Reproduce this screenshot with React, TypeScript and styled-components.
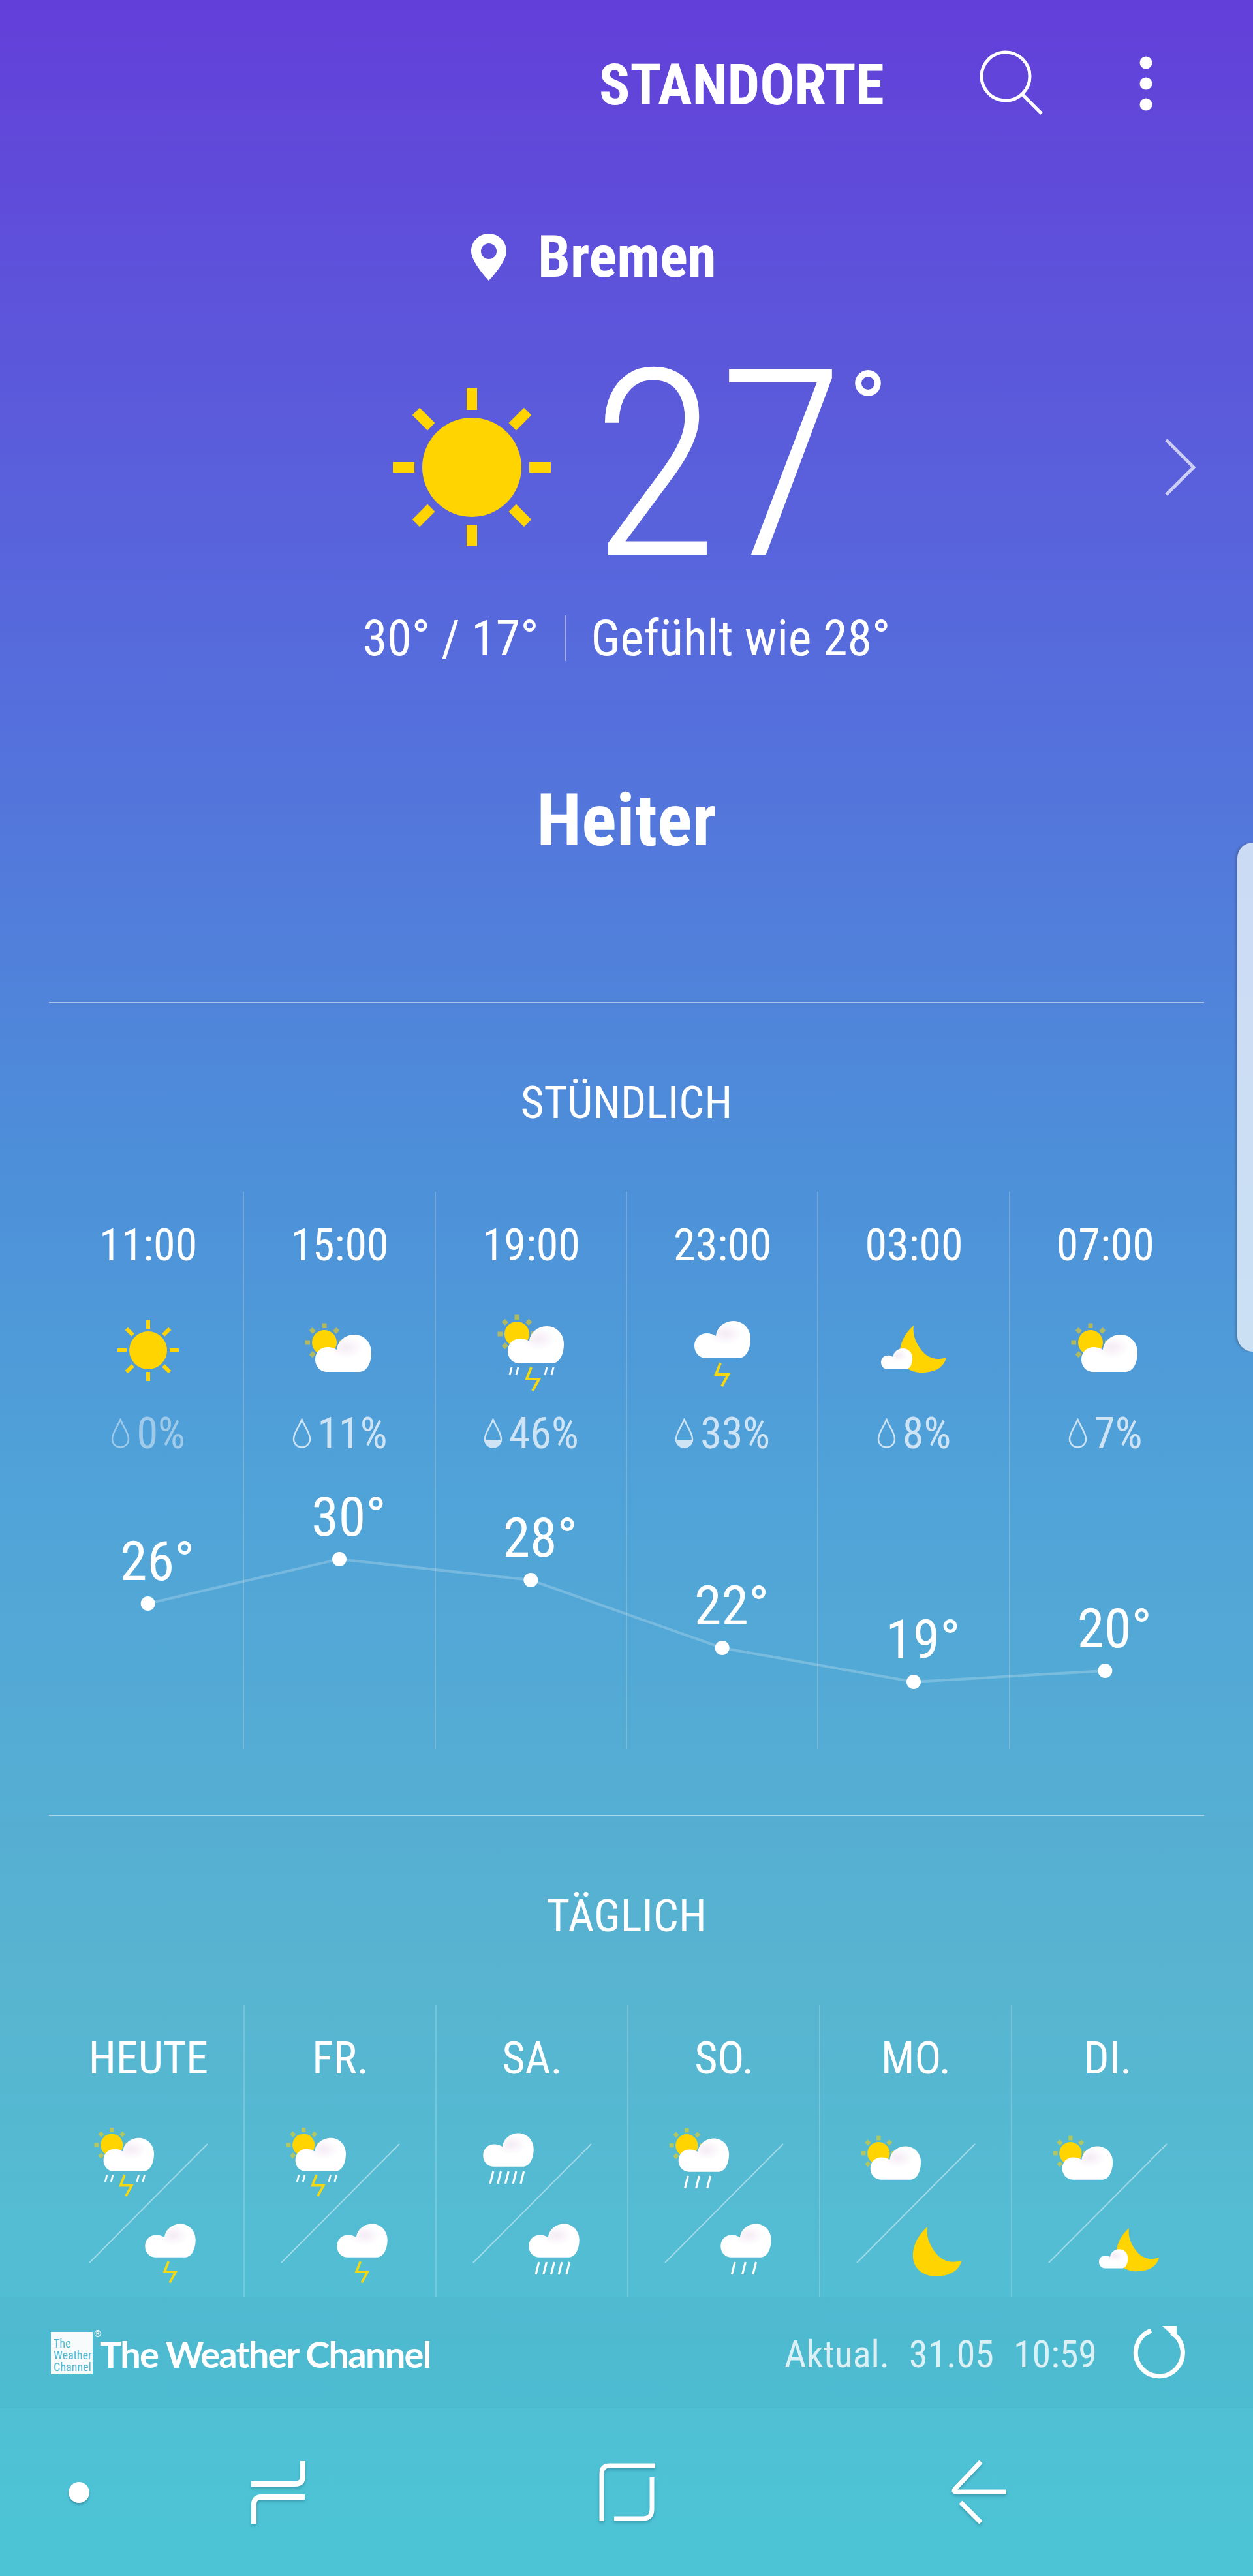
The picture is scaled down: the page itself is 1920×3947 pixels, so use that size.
import React from 'react';
import styled, { createGlobalStyle } from 'styled-components';

const CONDENSED = '"Roboto Condensed", Roboto, "Liberation Sans", sans-serif';
const YELLOW = '#ffd400';

const GlobalStyle = createGlobalStyle`
    html, body {
        margin: 0;
        padding: 0;
        background: #4cc4d6;
    }
    * {
        box-sizing: border-box;
    }
`;

const Page = styled.div`
    position: relative;
    width: 1920px;
    height: 3947px;
    overflow: hidden;
    display: flex;
    flex-direction: column;
    color: #fff;
    font-family: ${CONDENSED};
    font-stretch: 75%;
    background: linear-gradient(180deg,
        rgb(99, 63, 217) 0%,
        rgb(85, 110, 220) 27%,
        rgb(77, 143, 217) 45%,
        rgb(80, 163, 216) 58%,
        rgb(88, 180, 208) 77%,
        rgb(82, 190, 212) 89%,
        rgb(76, 196, 214) 100%);
`;

const TopBar = styled.div`
    height: 260px;
    display: flex;
    align-items: center;
    padding-left: 918px;
`;

const LocationsLink = styled.div`
    font-size: 88px;
    font-weight: 700;
    line-height: 100px;
    width: 583px;
`;

const SearchIcon = styled.svg`
    width: 100px;
    height: 100px;
    margin-right: 143px;
    margin-top: -6px;
`;

const MoreIcon = styled.svg`
    width: 24px;
    height: 90px;
    margin-top: -4px;
`;

const LocationRow = styled.div`
    height: 268px;
    display: flex;
    align-items: center;
    padding-left: 722px;
    gap: 48px;
`;

const CityName = styled.div`
    font-size: 89px;
    font-weight: 700;
    line-height: 100px;
`;

const CurrentRow = styled.div`
    height: 376px;
    display: flex;
    align-items: center;
    padding-left: 598px;
`;

const BigSun = styled.svg`
    width: 250px;
    height: 250px;
    flex: none;
`;

const BigTemp = styled.div`
    font-size: 400px;
    font-weight: 300;
    line-height: 300px;
    margin-left: 58px;
    margin-bottom: 4px;
    width: 394px;
`;

const BigDegree = styled.div`
    align-self: flex-start;
    font-size: 160px;
    font-weight: 400;
    line-height: 160px;
    margin-top: 20px;
`;

const Chevron = styled.svg`
    width: 48px;
    height: 88px;
    margin-left: auto;
    margin-right: 88px;
`;

const MetaRow = styled.div`
    height: 148px;
    display: flex;
    align-items: center;
    justify-content: center;
    gap: 39px;
    font-size: 76px;
    line-height: 90px;
`;

const MetaSep = styled.div`
    width: 2px;
    height: 70px;
    background: rgba(255, 255, 255, 0.45);
`;

const Condition = styled.div`
    height: 483px;
    padding-bottom: 75px;
    display: flex;
    align-items: center;
    justify-content: center;
    font-size: 112px;
    font-weight: 700;
`;

const Rule = styled.div<{ $gap?: number }>`
    height: 2px;
    margin: ${(p) => p.$gap ?? 0}px 75px 0;
    background: rgba(255, 255, 255, 0.5);
`;

const SectionTitle = styled.div`
    height: 100px;
    margin: 102px 0 87px;
    display: flex;
    align-items: center;
    justify-content: center;
    font-size: 69px;
`;

const HourGrid = styled.div`
    position: relative;
    height: 854px;
    margin: 0 80px;
    display: grid;
    grid-template-columns: repeat(6, 1fr);
`;

const Column = styled.div<{ $first?: boolean }>`
    display: flex;
    flex-direction: column;
    align-items: center;
    border-left: 2px solid ${(p) => (p.$first ? 'transparent' : 'rgba(255, 255, 255, 0.2)')};
    margin-left: -1px;
`;

const HeadCell = styled.div`
    height: 164px;
    display: flex;
    align-items: center;
    font-size: 68px;
`;

const HourIconCell = styled.div`
    height: 158px;
    display: flex;
    align-items: center;
`;

const HourIcon = styled.svg`
    width: 130px;
    height: 130px;
    overflow: visible;
`;

const PopCell = styled.div<{ $dim?: boolean }>`
    height: 96px;
    display: flex;
    align-items: center;
    gap: 10px;
    font-size: 66px;
    opacity: ${(p) => (p.$dim ? 0.45 : 0.72)};
`;

const DropIcon = styled.svg`
    width: 29px;
    height: 46px;
`;

const ChartCell = styled.div`
    position: relative;
    flex: 1;
    width: 100%;
`;

const TempLabel = styled.div`
    position: absolute;
    left: 0;
    right: 0;
    padding-left: 28px;
    text-align: center;
    font-size: 84px;
    line-height: 90px;
`;

const ChartLine = styled.svg`
    position: absolute;
    left: 0;
    top: 418px;
    width: 1760px;
    height: 436px;
    pointer-events: none;
`;

const DayGrid = styled.div`
    height: 448px;
    margin: 0 80px;
    display: grid;
    grid-template-columns: repeat(6, 1fr);
`;

const DayIcon = styled.svg`
    width: 293px;
    height: 284px;
    overflow: visible;
`;

const Footer = styled.div`
    height: 170px;
    display: flex;
    align-items: center;
    padding: 0 97px 0 78px;
    background: rgba(40, 120, 150, 0.06);
`;

const LogoBox = styled.div`
    position: relative;
    width: 64px;
    height: 65px;
    padding: 0 0 2px 4px;
    display: flex;
    flex-direction: column;
    justify-content: flex-end;
    background: #f8fbfc;
    color: #4fb6cc;
    font-size: 18px;
    line-height: 18px;
`;

const Registered = styled.span`
    position: absolute;
    left: 66px;
    top: -4px;
    color: #fff;
    font-size: 14px;
    line-height: 14px;
`;

const Wordmark = styled.div`
    margin: 4px 0 0 11px;
    font-family: Lato, "Noto Sans", sans-serif;
    font-stretch: normal;
    font-size: 56px;
    font-weight: 700;
    line-height: 60px;
    letter-spacing: -1.8px;
`;

const UpdatedAt = styled.div`
    margin: 4px 0 0 auto;
    display: flex;
    gap: 30px;
    font-size: 58px;
    opacity: 0.8;
`;

const RefreshIcon = styled.svg`
    width: 90px;
    height: 90px;
    margin-left: 52px;
`;

const NavBar = styled.div`
    flex: 1;
    display: grid;
    grid-template-columns: 242px 368px 702px 378px 1fr;
    place-items: center;
`;

const NavIcon = styled.svg`
    width: 100px;
    height: 110px;
    filter: drop-shadow(0 3px 2px rgba(30, 90, 110, 0.35));
`;

const NavDot = styled.div`
    width: 32px;
    height: 32px;
    border-radius: 50%;
    background: #fff;
    box-shadow: 0 3px 3px rgba(30, 90, 110, 0.35);
`;

const EdgeHandle = styled.div`
    position: absolute;
    right: 0;
    top: 1291px;
    width: 24px;
    height: 780px;
    background: rgba(226, 236, 248, 0.85);
    border-radius: 24px 0 0 24px;
    box-shadow: -3px 0 3px rgba(60, 70, 90, 0.35);
`;

const Defs = () => (
    <defs>
        <radialGradient id="cloudFill" cx="0.55" cy="0.34" r="0.3">
            <stop offset="0" stopColor="#f5ecf5" />
            <stop offset="1" stopColor="#ffffff" />
        </radialGradient>
    </defs>
);

const Sun = ({ r, inner, outer, w, rayOpacity = 1 }: { r: number; inner: number; outer: number; w: number; rayOpacity?: number }) => (
    <g>
        {[0, 45, 90, 135, 180, 225, 270, 315].map((a) => (
            <rect
                key={a}
                x={-w / 2}
                y={-outer}
                width={w}
                height={outer - inner}
                fill={YELLOW}
                opacity={rayOpacity}
                transform={`rotate(${a})`}
            />
        ))}
        <circle r={r} fill={YELLOW} />
    </g>
);

// 86 x 57, top left at 0,0
const CLOUD =
    'M18 57C8 57 0 49 0 38C0 27 8 19 19 19C24 19 28 20 33 23C34 10 46 0 60 0C75 0 86 12 86 27C86 36 84 44 80 50C76 55 72 57 67 57Z';

const Cloud = ({ x, y, s = 1 }: { x: number; y: number; s?: number }) => (
    <path d={CLOUD} fill="url(#cloudFill)" transform={`translate(${x} ${y}) scale(${s})`} />
);

const Bolt = ({ x, y }: { x: number; y: number }) => (
    <polyline
        points={`${x + 8},${y} ${x + 1},${y + 18} ${x + 20},${y + 18} ${x + 10},${y + 36}`}
        fill="none"
        stroke="#f6d80e"
        strokeWidth="4"
    />
);

const Ticks = ({ xs, y, len, w = 3 }: { xs: number[]; y: number; len: number; w?: number }) => (
    <g stroke="#fff" strokeWidth={w}>
        {xs.map((x) => (
            <line key={x} x1={x + len * 0.25} y1={y} x2={x} y2={y + len} />
        ))}
    </g>
);

const SunCloud = () => (
    <g>
        <g transform="translate(-23 -12)">
            <Sun r={19} inner={22} outer={29.5} w={7} rayOpacity={0.55} />
        </g>
        <Cloud x={-37} y={-24} />
    </g>
);

const StormSun = () => (
    <g>
        <g transform="translate(1 -13)">
            <SunCloud />
        </g>
        <Ticks xs={[-33, -23, 21, 31]} y={26} len={12} />
        <Bolt x={-8} y={26} />
    </g>
);

const CloudBolt = () => (
    <g>
        <Cloud x={-43} y={-45} />
        <Bolt x={-11} y={19} />
    </g>
);

const Moon = () => (
    <path
        d="M0 -38C-15 -25 -22 -8 -21 6C-20 24 -5 34 12 34C30 34 46 28 50 11C36 16 22 12 13 1C3 -11 -2 -24 0 -38Z"
        fill={YELLOW}
    />
);

const MoonCloud = () => (
    <g>
        <Moon />
        <Cloud x={-50} y={-3} s={0.56} />
    </g>
);

const CloudRain = ({ count }: { count: 3 | 5 }) => (
    <g>
        <Cloud x={-43} y={-45} />
        {count === 5 ? (
            <Ticks xs={[-31, -18, -5, 8, 21]} y={20} len={21} w={3.5} />
        ) : (
            <Ticks xs={[-24, -6, 12]} y={20} len={21} w={3.5} />
        )}
    </g>
);

const SunCloudRain = () => (
    <g>
        <SunCloud />
        <Ticks xs={[-26, -7, 12]} y={40} len={21} w={3.5} />
    </g>
);

const place = (x: number, y: number, s = 0.9) => `translate(${146 + x} ${y - 3236}) scale(${s})`;

const hourIcons = [
    <Sun r={29} inner={33} outer={47} w={6} />,
    <SunCloud />,
    <StormSun />,
    <CloudBolt />,
    <MoonCloud />,
    <SunCloud />,
];

const hours = [
    { time: '11:00', pop: 0, temp: 26, y: 2457 },
    { time: '15:00', pop: 11, temp: 30, y: 2389 },
    { time: '19:00', pop: 46, temp: 28, y: 2421 },
    { time: '23:00', pop: 33, temp: 22, y: 2525 },
    { time: '03:00', pop: 8, temp: 19, y: 2577 },
    { time: '07:00', pop: 7, temp: 20, y: 2560 },
];

const CHART_TOP = 2244;
const COL = 1760 / 6;

const days = [
    {
        label: 'HEUTE',
        top: <g transform={place(-36, 3309)}><StormSun /></g>,
        bottom: <g transform={place(34, 3448)}><CloudBolt /></g>,
    },
    {
        label: 'FR.',
        top: <g transform={place(-36, 3309)}><StormSun /></g>,
        bottom: <g transform={place(34, 3448)}><CloudBolt /></g>,
    },
    {
        label: 'SA.',
        top: <g transform={place(-36, 3309)}><CloudRain count={5} /></g>,
        bottom: <g transform={place(34, 3448)}><CloudRain count={5} /></g>,
    },
    {
        label: 'SO.',
        top: <g transform={place(-36, 3298)}><SunCloudRain /></g>,
        bottom: <g transform={place(34, 3448)}><CloudRain count={3} /></g>,
    },
    {
        label: 'MO.',
        top: <g transform={place(-36, 3310)}><SunCloud /></g>,
        bottom: <g transform={place(18, 3452, 1.05)}><Moon /></g>,
    },
    {
        label: 'DI.',
        top: <g transform={place(-36, 3310)}><SunCloud /></g>,
        bottom: <g transform={place(33, 3449, 0.92)}><MoonCloud /></g>,
    },
];

const Drop = ({ level }: { level: boolean }) => (
    <DropIcon viewBox="0 0 29 46">
        <path
            d="M14.5 2C10 14 2 22 2 32A12.5 12.5 0 0 0 27 32C27 22 19 14 14.5 2Z"
            fill="none"
            stroke="#fff"
            strokeWidth="2.5"
        />
        {level && <path d="M2 33A12.5 12.5 0 0 0 27 33Z" fill="#fff" />}
    </DropIcon>
);

export default function App() {
    const points = hours.map((h, i) => `${COL * (i + 0.5)},${h.y - CHART_TOP}`).join(' ');

    return (
        <Page>
            <GlobalStyle />

            <TopBar>
                <LocationsLink>STANDORTE</LocationsLink>
                <SearchIcon viewBox="0 0 100 100">
                    <circle cx="40" cy="40" r="37" fill="none" stroke="#fff" strokeWidth="5" />
                    <line x1="66" y1="68" x2="95" y2="97" stroke="#fff" strokeWidth="5" />
                </SearchIcon>
                <MoreIcon viewBox="0 0 24 90">
                    <circle cx="12" cy="13" r="9.5" fill="#fff" />
                    <circle cx="12" cy="45" r="9.5" fill="#fff" />
                    <circle cx="12" cy="77" r="9.5" fill="#fff" />
                </MoreIcon>
            </TopBar>

            <LocationRow>
                <svg width="54" height="72" viewBox="0 0 54 72">
                    <path
                        fillRule="evenodd"
                        d="M27 0C12 0 0 12 0 27C0 44 27 72 27 72C27 72 54 44 54 27C54 12 42 0 27 0ZM27 15A12 12 0 1 1 27 39A12 12 0 1 1 27 15Z"
                        fill="#fff"
                    />
                </svg>
                <CityName>Bremen</CityName>
            </LocationRow>

            <CurrentRow>
                <BigSun viewBox="-125 -125 250 250">
                    <Sun r={76} inner={88} outer={121} w={16} />
                </BigSun>
                <BigTemp>27</BigTemp>
                <BigDegree>°</BigDegree>
                <Chevron viewBox="0 0 48 88">
                    <polyline points="3,2 45,44 3,86" fill="none" stroke="#fff" strokeOpacity="0.7" strokeWidth="5" />
                </Chevron>
            </CurrentRow>

            <MetaRow>
                <span>30° / 17°</span>
                <MetaSep />
                <span>Gefühlt wie 28°</span>
            </MetaRow>

            <Condition>Heiter</Condition>
            <Rule />
            <SectionTitle>STÜNDLICH</SectionTitle>

            <HourGrid>
                {hours.map((h, i) => (
                    <Column key={h.time} $first={i === 0}>
                        <HeadCell>{h.time}</HeadCell>
                        <HourIconCell>
                            <HourIcon viewBox="-65 -65 130 130">
                                <Defs />
                                {hourIcons[i]}
                            </HourIcon>
                        </HourIconCell>
                        <PopCell $dim={h.pop === 0}>
                            <Drop level={h.pop > 30} />
                            {h.pop}%
                        </PopCell>
                        <ChartCell>
                            <TempLabel style={{ top: h.y - CHART_TOP - 109 }}>{h.temp}°</TempLabel>
                        </ChartCell>
                    </Column>
                ))}
                <ChartLine viewBox="0 0 1760 436">
                    <polyline points={points} fill="none" stroke="#fff" strokeOpacity="0.22" strokeWidth="4" />
                    {hours.map((h, i) => (
                        <circle key={h.time} cx={COL * (i + 0.5)} cy={h.y - CHART_TOP} r="11" fill="#fff" />
                    ))}
                </ChartLine>
            </HourGrid>

            <Rule $gap={101} />
            <SectionTitle>TÄGLICH</SectionTitle>

            <DayGrid>
                {days.map((d, i) => (
                    <Column key={d.label} $first={i === 0}>
                        <HeadCell>{d.label}</HeadCell>
                        <DayIcon viewBox="0 0 293 284">
                            <Defs />
                            <line x1="56" y1="231" x2="237" y2="49" stroke="#fff" strokeOpacity="0.45" strokeWidth="2" />
                            {d.top}
                            {d.bottom}
                        </DayIcon>
                    </Column>
                ))}
            </DayGrid>

            <Footer>
                <LogoBox>
                    <span>The</span>
                    <span>Weather</span>
                    <span>Channel</span>
                    <Registered>®</Registered>
                </LogoBox>
                <Wordmark>The Weather Channel</Wordmark>
                <UpdatedAt>
                    <span>Aktual.</span>
                    <span>31.05</span>
                    <span>10:59</span>
                </UpdatedAt>
                <RefreshIcon viewBox="0 0 90 90">
                    <path d="M31 11A36 36 0 1 0 62 14" fill="none" stroke="#fff" strokeWidth="7" />
                    <polygon points="48,4 70,4 70,24" fill="#fff" />
                </RefreshIcon>
            </Footer>

            <NavBar>
                <NavDot />
                <NavIcon viewBox="0 0 100 110">
                    <g fill="none" stroke="#fff" strokeWidth="8">
                        <path d="M88 7V30C88 38 84 42 76 42H9" />
                        <path d="M91 62H24C17 62 13 66 13 73V103" />
                    </g>
                </NavIcon>
                <NavIcon viewBox="0 0 100 110">
                    <g fill="none" stroke="#fff" strokeWidth="7">
                        <path d="M11 99V26C11 18 15 14 23 14H93" />
                        <path d="M88 32V81C88 90 83 95 75 95H30" />
                    </g>
                </NavIcon>
                <NavIcon viewBox="0 0 100 110">
                    <g fill="none" stroke="#fff" strokeWidth="7">
                        <path d="M52 8L12 50C10 53 11 54 15 54H91" />
                        <path d="M21 70L52 101" />
                    </g>
                </NavIcon>
            </NavBar>

            <EdgeHandle />
        </Page>
    );
}
